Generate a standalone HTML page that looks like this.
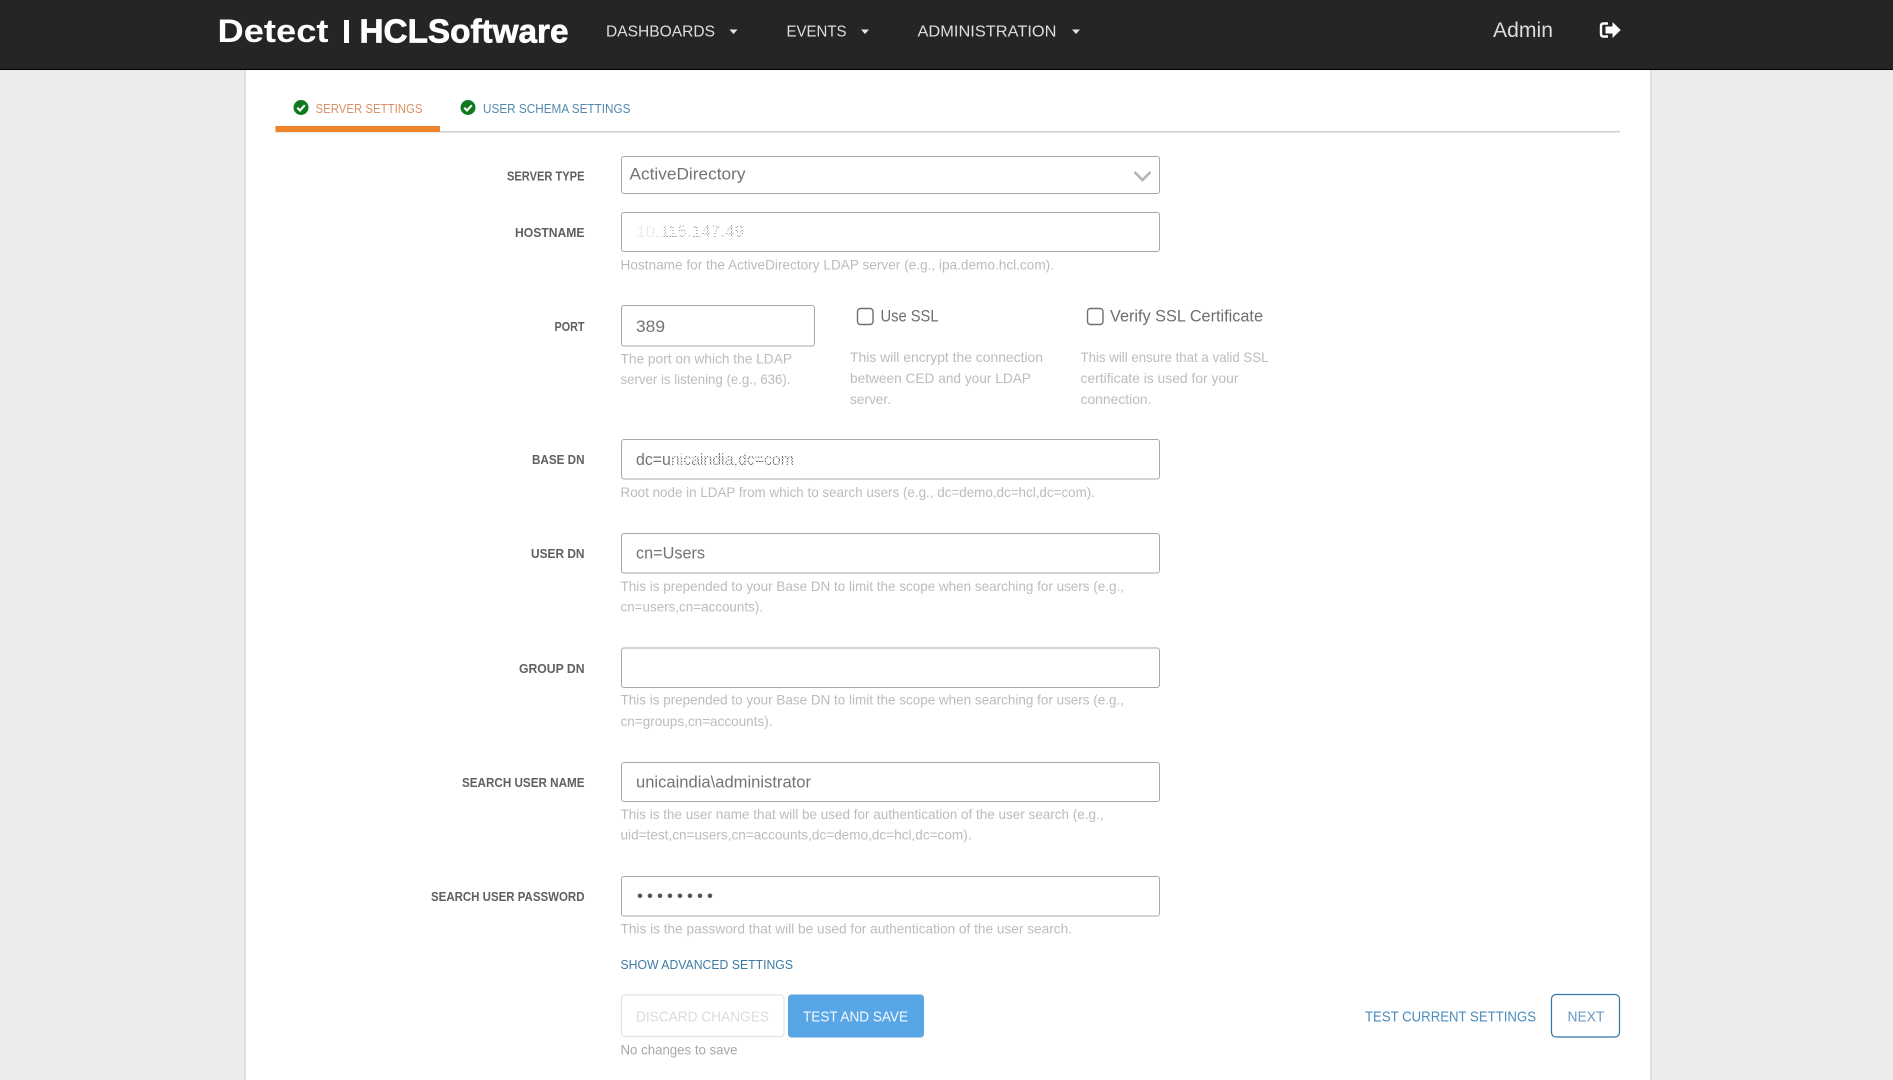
<!DOCTYPE html>
<html lang="en">
<head>
<meta charset="utf-8">
<title>Detect | HCLSoftware - Server Settings</title>
<style>
html,body{margin:0;padding:0;width:1893px;height:1080px;overflow:hidden;background:#ececec}
svg{display:block;font-family:"Liberation Sans",sans-serif}
.nav{font-size:15.5px;fill:#dedede}
.lbl{font-size:12.5px;font-weight:bold;fill:#606060}
.help{font-size:14px;fill:#bcbcbc}
.val{font-size:17px;fill:#737373}
.box{fill:#fff;stroke:#a8a8a8;stroke-width:1}
.chk{fill:#fff;stroke:#707070;stroke-width:1.4}
</style>
</head>
<body>
<svg width="1893" height="1080" viewBox="0 0 1893 1080" xmlns="http://www.w3.org/2000/svg">
  <defs>
    <pattern id="fuzz" width="3" height="3" patternUnits="userSpaceOnUse">
      <rect width="2" height="2" fill="#fff"/>
      <rect x="2" y="2" width="1" height="1" fill="#fff"/>
    </pattern>
  </defs>
  <!-- page -->
  <rect width="1893" height="1080" fill="#ececec"/>
  <rect x="244" y="69" width="2" height="1011" fill="#e0e0e0"/>
  <rect x="1650" y="69" width="2" height="1011" fill="#e0e0e0"/>
  <rect x="246" y="69" width="1404" height="1011" fill="#fff"/>

  <!-- navbar -->
  <rect width="1893" height="69" fill="#252525"/>
  <rect y="69" width="1893" height="1" fill="#000"/>
  <text x="217.500" y="42" font-size="32.500" font-weight="bold" fill="#fff" textLength="111" lengthAdjust="spacingAndGlyphs">Detect</text>
  <rect x="344" y="20" width="5" height="23" fill="#fff"/>
  <text x="359.500" y="42.500" font-size="33" font-weight="bold" fill="#fff" stroke="#fff" stroke-width=".7" textLength="209" lengthAdjust="spacingAndGlyphs">HCLSoftware</text>

  <text class="nav" x="606" y="36.500" textLength="109" lengthAdjust="spacingAndGlyphs">DASHBOARDS</text>
  <path d="M729.500 29.500h8l-4 4.500z" fill="#e8e8e8"/>
  <text class="nav" x="786.500" y="36.500" textLength="60" lengthAdjust="spacingAndGlyphs">EVENTS</text>
  <path d="M861 29.500h8l-4 4.500z" fill="#e8e8e8"/>
  <text class="nav" x="917.500" y="36.500" textLength="139" lengthAdjust="spacingAndGlyphs">ADMINISTRATION</text>
  <path d="M1072 29.500h8l-4 4.500z" fill="#e8e8e8"/>
  <text x="1493" y="37" font-size="21.500" fill="#dcdcdc" textLength="60" lengthAdjust="spacingAndGlyphs">Admin</text>
  <path d="M1608 23.500h-4.500q-2.500 0-2.500 2.500v8q0 2.500 2.500 2.500h4.500" fill="none" stroke="#fff" stroke-width="2.400"/>
  <path d="M1605.500 26.500h7v-4.500l8.200 8-8.200 8v-4.500h-7z" fill="#fff"/>

  <!-- tabs -->
  <rect x="275.500" y="131" width="1344.500" height="1.500" fill="#cfcfcf"/>
  <rect x="275.500" y="126" width="164.500" height="6" fill="#ee8329"/>
  <circle cx="301" cy="107.500" r="7.500" fill="#0d7a20"/>
  <path d="M297.300 107.800l2.700 2.700 4.800-5.300" fill="none" stroke="#fff" stroke-width="2.100"/>
  <text x="315.500" y="113" font-size="13" fill="#da9268" textLength="107" lengthAdjust="spacingAndGlyphs">SERVER SETTINGS</text>
  <circle cx="468" cy="107.500" r="7.500" fill="#0d7a20"/>
  <path d="M464.300 107.800l2.700 2.700 4.800-5.300" fill="none" stroke="#fff" stroke-width="2.100"/>
  <text x="483" y="113" font-size="13" fill="#538aae" textLength="147.500" lengthAdjust="spacingAndGlyphs">USER SCHEMA SETTINGS</text>

  <!-- server type -->
  <text class="lbl" x="507" y="180.500" textLength="77.500" lengthAdjust="spacingAndGlyphs">SERVER TYPE</text>
  <rect class="box" x="621.500" y="156.500" width="538" height="37" rx="2.500"/>
  <text class="val" x="629.500" y="179.500" textLength="116" lengthAdjust="spacingAndGlyphs">ActiveDirectory</text>
  <path d="M1134.500 172l8 8 8-8" fill="none" stroke="#b5b5b5" stroke-width="2.600"/>

  <!-- hostname -->
  <text class="lbl" x="515" y="237" textLength="69.500" lengthAdjust="spacingAndGlyphs">HOSTNAME</text>
  <rect class="box" x="621.500" y="212.500" width="538" height="39" rx="2.500"/>
  <text class="val" x="636" y="237" textLength="108" lengthAdjust="spacingAndGlyphs" style="fill:#a8a8a8">10.115.147.49</text>
  <rect x="630" y="222" width="118" height="18" fill="url(#fuzz)"/>
  <rect x="630" y="222" width="34" height="18" fill="#fff" opacity=".6"/>
  <text class="help" x="620.500" y="269.500" textLength="433.500" lengthAdjust="spacingAndGlyphs">Hostname for the ActiveDirectory LDAP server (e.g., ipa.demo.hcl.com).</text>

  <!-- port -->
  <text class="lbl" x="554.500" y="331" textLength="30" lengthAdjust="spacingAndGlyphs">PORT</text>
  <rect class="box" x="621.500" y="305.500" width="193" height="40.500" rx="2.500"/>
  <text class="val" x="636" y="332" textLength="29" lengthAdjust="spacingAndGlyphs">389</text>
  <text class="help" x="620.500" y="363.500" textLength="171.500" lengthAdjust="spacingAndGlyphs">The port on which the LDAP</text>
  <text class="help" x="620.500" y="384" textLength="170" lengthAdjust="spacingAndGlyphs">server is listening (e.g., 636).</text>

  <rect class="chk" x="857.500" y="308.500" width="15.500" height="16" rx="3"/>
  <text x="880.500" y="321.500" font-size="17" fill="#6e6e6e" textLength="58" lengthAdjust="spacingAndGlyphs">Use SSL</text>
  <text class="help" x="850" y="362" textLength="193" lengthAdjust="spacingAndGlyphs">This will encrypt the connection</text>
  <text class="help" x="850" y="383" textLength="181" lengthAdjust="spacingAndGlyphs">between CED and your LDAP</text>
  <text class="help" x="850" y="404" textLength="41" lengthAdjust="spacingAndGlyphs">server.</text>

  <rect class="chk" x="1087.500" y="308.500" width="15.500" height="16" rx="3"/>
  <text x="1110" y="321.500" font-size="17" fill="#6e6e6e" textLength="153" lengthAdjust="spacingAndGlyphs">Verify SSL Certificate</text>
  <text class="help" x="1080.500" y="362" textLength="188" lengthAdjust="spacingAndGlyphs">This will ensure that a valid SSL</text>
  <text class="help" x="1080.500" y="383" textLength="158" lengthAdjust="spacingAndGlyphs">certificate is used for your</text>
  <text class="help" x="1080.500" y="404" textLength="71" lengthAdjust="spacingAndGlyphs">connection.</text>

  <!-- base dn -->
  <text class="lbl" x="532" y="464" textLength="52.500" lengthAdjust="spacingAndGlyphs">BASE DN</text>
  <rect class="box" x="621.500" y="439.500" width="538" height="39.500" rx="2.500"/>
  <text class="val" x="636" y="465" textLength="158" lengthAdjust="spacingAndGlyphs">dc=unicaindia,dc=com</text>
  <rect x="671" y="449" width="126" height="20" fill="url(#fuzz)" opacity=".75"/>
  <text class="help" x="620.500" y="497" textLength="474.500" lengthAdjust="spacingAndGlyphs">Root node in LDAP from which to search users (e.g., dc=demo,dc=hcl,dc=com).</text>

  <!-- user dn -->
  <text class="lbl" x="531" y="558" textLength="53.500" lengthAdjust="spacingAndGlyphs">USER DN</text>
  <rect class="box" x="621.500" y="533.500" width="538" height="39.500" rx="2.500"/>
  <text class="val" x="636" y="558.500" textLength="69" lengthAdjust="spacingAndGlyphs">cn=Users</text>
  <text class="help" x="620.500" y="591" textLength="503.500" lengthAdjust="spacingAndGlyphs">This is prepended to your Base DN to limit the scope when searching for users (e.g.,</text>
  <text class="help" x="620.500" y="611.500" textLength="142.500" lengthAdjust="spacingAndGlyphs">cn=users,cn=accounts).</text>

  <!-- group dn -->
  <text class="lbl" x="519" y="673" textLength="65.500" lengthAdjust="spacingAndGlyphs">GROUP DN</text>
  <rect class="box" x="621.500" y="648" width="538" height="39.500" rx="2.500"/>
  <text class="help" x="620.500" y="704.500" textLength="503.500" lengthAdjust="spacingAndGlyphs">This is prepended to your Base DN to limit the scope when searching for users (e.g.,</text>
  <text class="help" x="620.500" y="726" textLength="152" lengthAdjust="spacingAndGlyphs">cn=groups,cn=accounts).</text>

  <!-- search user name -->
  <text class="lbl" x="462" y="787" textLength="122.500" lengthAdjust="spacingAndGlyphs">SEARCH USER NAME</text>
  <rect class="box" x="621.500" y="762.500" width="538" height="39" rx="2.500"/>
  <text class="val" x="636" y="787.500" textLength="175" lengthAdjust="spacingAndGlyphs">unicaindia\administrator</text>
  <text class="help" x="620.500" y="819" textLength="483" lengthAdjust="spacingAndGlyphs">This is the user name that will be used for authentication of the user search (e.g.,</text>
  <text class="help" x="620.500" y="839.500" textLength="351" lengthAdjust="spacingAndGlyphs">uid=test,cn=users,cn=accounts,dc=demo,dc=hcl,dc=com).</text>

  <!-- password -->
  <text class="lbl" x="431" y="901" textLength="153.500" lengthAdjust="spacingAndGlyphs">SEARCH USER PASSWORD</text>
  <rect class="box" x="621.500" y="876.500" width="538" height="39.500" rx="2.500"/>
  <text x="637" y="901.500" font-size="17" fill="#555" textLength="76" lengthAdjust="spacing">••••••••</text>
  <text class="help" x="620.500" y="933.500" textLength="451.500" lengthAdjust="spacingAndGlyphs">This is the password that will be used for authentication of the user search.</text>

  <text x="620.500" y="969" font-size="12.500" fill="#3d7ba5" textLength="172.500" lengthAdjust="spacingAndGlyphs">SHOW ADVANCED SETTINGS</text>

  <!-- buttons -->
  <rect x="621.500" y="995" width="162.500" height="41.500" rx="3.500" fill="#fff" stroke="#e4e4e4" stroke-width="1.200"/>
  <text x="636" y="1021.500" font-size="14.500" fill="#dcdcdc" textLength="133" lengthAdjust="spacingAndGlyphs">DISCARD CHANGES</text>
  <rect x="788" y="994.500" width="136" height="43" rx="3.500" fill="#58a6e6"/>
  <text x="803" y="1021.500" font-size="14.500" fill="#f4f9fd" textLength="105" lengthAdjust="spacingAndGlyphs">TEST AND SAVE</text>
  <text x="620.500" y="1054.500" font-size="14" fill="#a8a8a8" textLength="117" lengthAdjust="spacingAndGlyphs">No changes to save</text>

  <text x="1365" y="1021.500" font-size="14.500" fill="#4a8dbc" textLength="171" lengthAdjust="spacingAndGlyphs">TEST CURRENT SETTINGS</text>
  <rect x="1551.500" y="994.500" width="68" height="42.500" rx="4.500" fill="#fff" stroke="#2f78a8" stroke-width="1.200"/>
  <text x="1567.500" y="1021.500" font-size="14.500" fill="#6a97c4" textLength="37" lengthAdjust="spacingAndGlyphs">NEXT</text>
</svg>
</body>
</html>
